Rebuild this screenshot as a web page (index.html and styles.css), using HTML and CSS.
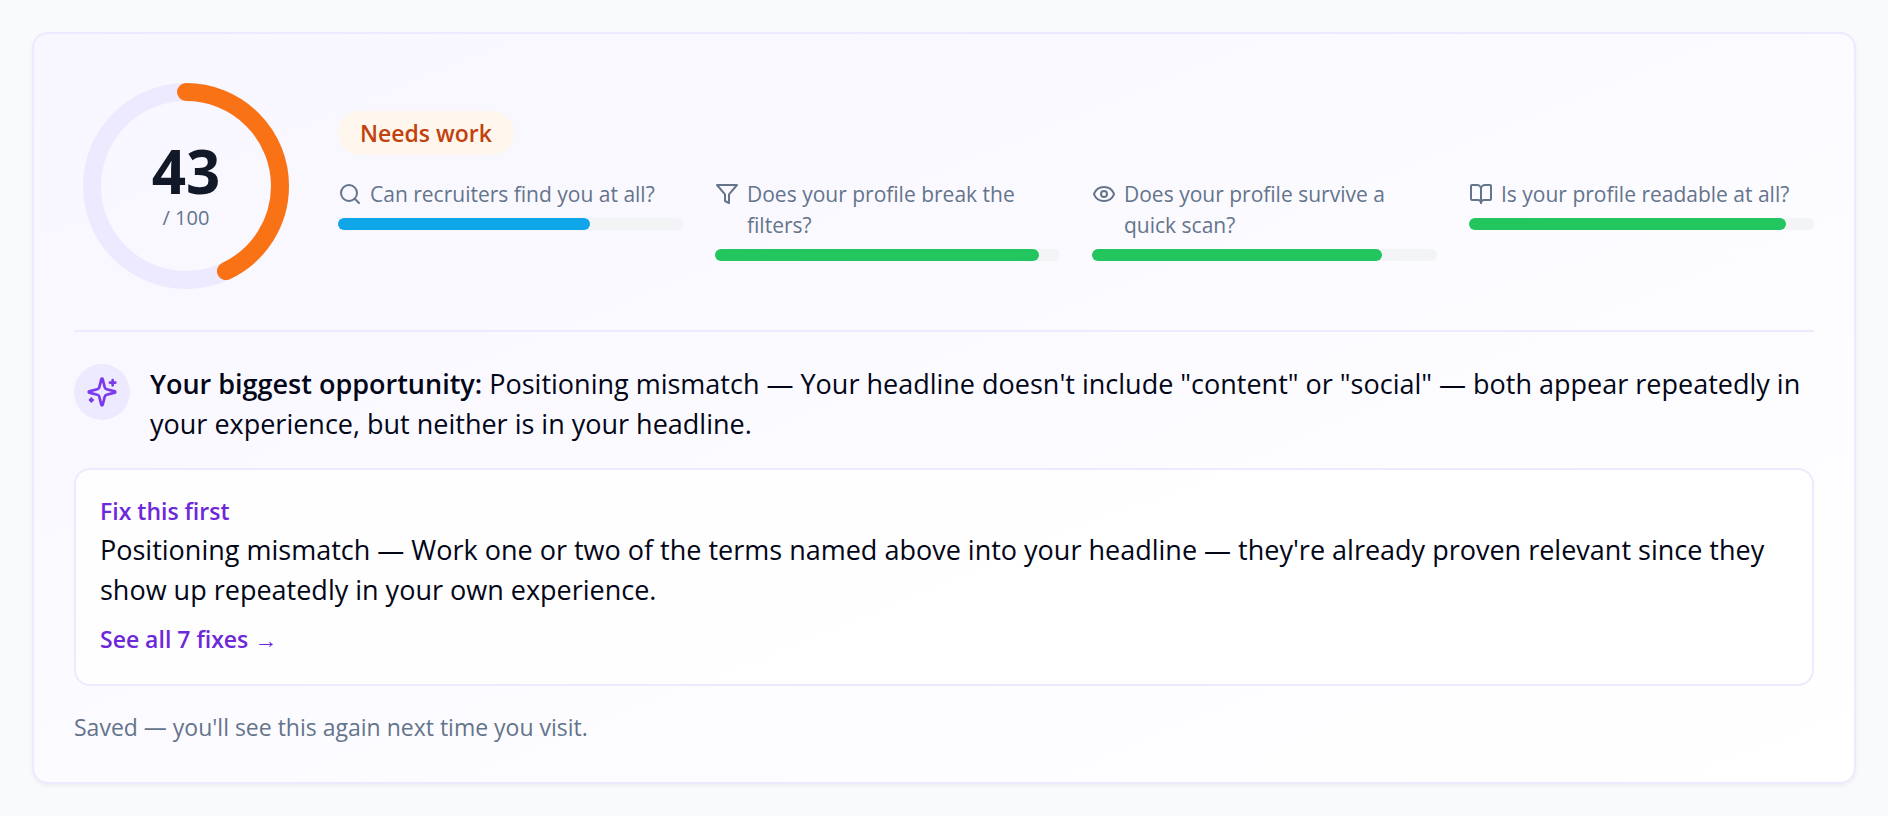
FILE: index.html
```html
<!DOCTYPE html>
<html lang="en">
<head>
  <meta charset="UTF-8" />
  <meta name="viewport" content="width=device-width, initial-scale=1.0"/>
  <title>Profile score</title>
  <link rel="stylesheet" href="styles.css">
</head>
<body>
  <main class="card">
    <section class="summary">
      <div class="ring">
        <svg viewBox="0 0 224 224" aria-hidden="true">
          <circle class="ring-track" cx="112" cy="112" r="94"/>
          <circle class="ring-value" cx="112" cy="112" r="94" pathLength="100" stroke-dasharray="43 100" transform="rotate(-90 112 112)"/>
        </svg>
        <div class="ring-label">
          <span class="score">43</span>
          <span class="score-max">/ 100</span>
        </div>
      </div>

      <div class="details">
        <span class="badge">Needs work</span>
        <div class="metrics">
          <div class="metric">
            <div class="metric-label">
              <svg class="icon" viewBox="0 0 24 24" aria-hidden="true"><circle cx="11" cy="11" r="8"/><path d="m21 21-4.3-4.3"/></svg>
              <span>Can recruiters find you at all?</span>
            </div>
            <div class="bar"><div class="bar-fill blue" style="width: 73%"></div></div>
          </div>
          <div class="metric">
            <div class="metric-label">
              <svg class="icon" viewBox="0 0 24 24" aria-hidden="true"><path d="M22 3H2l8 9.46V19l4 2v-8.54L22 3z"/></svg>
              <span>Does your profile break the filters?</span>
            </div>
            <div class="bar"><div class="bar-fill" style="width: 94%"></div></div>
          </div>
          <div class="metric">
            <div class="metric-label">
              <svg class="icon" viewBox="0 0 24 24" aria-hidden="true"><path d="M2.062 12.348a1 1 0 0 1 0-.696 10.75 10.75 0 0 1 19.876 0 1 1 0 0 1 0 .696 10.75 10.75 0 0 1-19.876 0"/><circle cx="12" cy="12" r="3"/></svg>
              <span>Does your profile survive a quick scan?</span>
            </div>
            <div class="bar"><div class="bar-fill" style="width: 84%"></div></div>
          </div>
          <div class="metric">
            <div class="metric-label">
              <svg class="icon" viewBox="0 0 24 24" aria-hidden="true"><path d="M12 7v14"/><path d="M3 18a1 1 0 0 1-1-1V4a1 1 0 0 1 1-1h5a4 4 0 0 1 4 4 4 4 0 0 1 4-4h5a1 1 0 0 1 1 1v13a1 1 0 0 1-1 1h-6a3 3 0 0 0-3 3 3 3 0 0 0-3-3z"/></svg>
              <span>Is your profile readable at all?</span>
            </div>
            <div class="bar"><div class="bar-fill" style="width: 92%"></div></div>
          </div>
        </div>
      </div>
    </section>

    <section class="opportunity">
      <div class="spark">
        <svg class="icon" viewBox="0 0 24 24" aria-hidden="true"><path d="M9.937 15.5A2 2 0 0 0 8.5 14.063l-6.135-1.582a.5.5 0 0 1 0-.962L8.5 9.936A2 2 0 0 0 9.937 8.5l1.582-6.135a.5.5 0 0 1 .963 0L14.063 8.5A2 2 0 0 0 15.5 9.937l6.135 1.581a.5.5 0 0 1 0 .964L15.5 14.063a2 2 0 0 0-1.437 1.437l-1.582 6.135a.5.5 0 0 1-.963 0z"/><path d="M20 3v4"/><path d="M22 5h-4"/><path d="M4 17v2"/><path d="M5 18H3"/></svg>
      </div>
      <p class="text"><strong>Your biggest opportunity:</strong> Positioning mismatch — Your headline doesn't include "content" or "social" — both appear repeatedly in your experience, but neither is in your headline.</p>
    </section>

    <section class="fix">
      <h2>Fix this first</h2>
      <p class="text">Positioning mismatch — Work one or two of the terms named above into your headline — they're already proven relevant since they show up repeatedly in your own experience.</p>
      <a class="fix-link" href="#fixes">See all 7 fixes →</a>
    </section>

    <p class="saved">Saved — you'll see this again next time you visit.</p>
  </main>
</body>
</html>
```
FILE: styles.css
```css
:root {
  --violet: #6d28d9;
  --violet-light: #ede9fe;
  --ink: #020617;
  --muted: #64748b;
  --green: #22c55e;
  --blue: #0ea5e9;
  --orange: #f97316;
}

* {
  box-sizing: border-box;
}
body {
  font-family: 'Open Sans', 'Noto Sans', sans-serif;
  margin: 0;
  padding: 32px;
  background: #f8fafc;
  color: var(--ink);
}
h2, p {
  margin: 0;
}
.card {
  padding: 40px 40px 38px;
  border: 2px solid var(--violet-light);
  border-radius: 16px;
  background: linear-gradient(to bottom right, #f8f6ff, #ffffff);
  box-shadow: 0 2px 4px rgba(0, 0, 0, 0.05);
}
.icon {
  flex-shrink: 0;
  fill: none;
  stroke: currentColor;
  stroke-width: 2;
  stroke-linecap: round;
  stroke-linejoin: round;
}

/* score */
.summary {
  display: flex;
  align-items: center;
  gap: 40px;
  padding-bottom: 32px;
  border-bottom: 2px solid var(--violet-light);
}
.ring {
  display: grid;
  flex-shrink: 0;
  width: 224px;
  height: 224px;
}
.ring > * {
  grid-area: 1 / 1;
}
.ring circle {
  fill: none;
  stroke-width: 18;
}
.ring .ring-track {
  stroke: var(--violet-light);
}
.ring .ring-value {
  stroke: var(--orange);
  stroke-linecap: round;
}
.ring-label {
  display: flex;
  flex-direction: column;
  align-items: center;
  justify-content: center;
}
.score {
  font-size: 60px;
  line-height: 62px;
  font-weight: 700;
  color: #111827;
}
.score-max {
  font-size: 20px;
  line-height: 31px;
  color: var(--muted);
}
.details {
  flex: 1;
  min-width: 0;
}
.badge {
  display: block;
  width: fit-content;
  padding: 5px 22px;
  border-radius: 22px;
  background: #fff7ed;
  color: #c2410c;
  font-size: 23px;
  line-height: 34px;
  font-weight: 600;
}
.metrics {
  display: grid;
  grid-template-columns: repeat(4, 1fr);
  gap: 32px;
  margin-top: 24px;
}
.metric-label {
  display: flex;
  gap: 8px;
  margin-bottom: 8px;
  font-size: 21px;
  line-height: 31px;
  color: var(--muted);
}
.metric-label .icon {
  width: 24px;
  height: 24px;
  margin-top: 3px;
}
.bar {
  height: 12px;
  border-radius: 6px;
  background: #f3f4f6;
}
.bar-fill {
  height: 100%;
  border-radius: 6px;
  background: var(--green);
}
.bar-fill.blue {
  background: var(--blue);
}

/* advice */
.opportunity {
  display: flex;
  gap: 20px;
  margin-top: 32px;
}
.spark {
  display: flex;
  align-items: center;
  justify-content: center;
  flex-shrink: 0;
  width: 56px;
  height: 56px;
  border-radius: 50%;
  background: var(--violet-light);
  color: #7c3aed;
}
.spark .icon {
  width: 32px;
  height: 32px;
}
.text {
  font-size: 27px;
  line-height: 40px;
}
.text strong {
  font-weight: 600;
}
.fix {
  margin-top: 24px;
  padding: 24px;
  border: 2px solid var(--violet-light);
  border-radius: 16px;
  background: rgba(255, 255, 255, 0.8);
}
.fix h2 {
  margin-bottom: 2px;
  font-size: 23px;
  line-height: 34px;
  font-weight: 600;
  color: var(--violet);
}
.fix-link {
  display: block;
  width: fit-content;
  margin-top: 12px;
  padding-bottom: 4px;
  font-size: 23px;
  line-height: 34px;
  font-weight: 600;
  color: var(--violet);
  text-decoration: none;
}
.fix-link:hover {
  text-decoration: underline;
}
.saved {
  margin-top: 24px;
  font-size: 23px;
  line-height: 34px;
  color: var(--muted);
}

@media (max-width: 1100px) {
  .summary {
    flex-direction: column;
    align-items: flex-start;
  }
  .details {
    width: 100%;
  }
  .metrics {
    grid-template-columns: repeat(2, 1fr);
  }
}
```
